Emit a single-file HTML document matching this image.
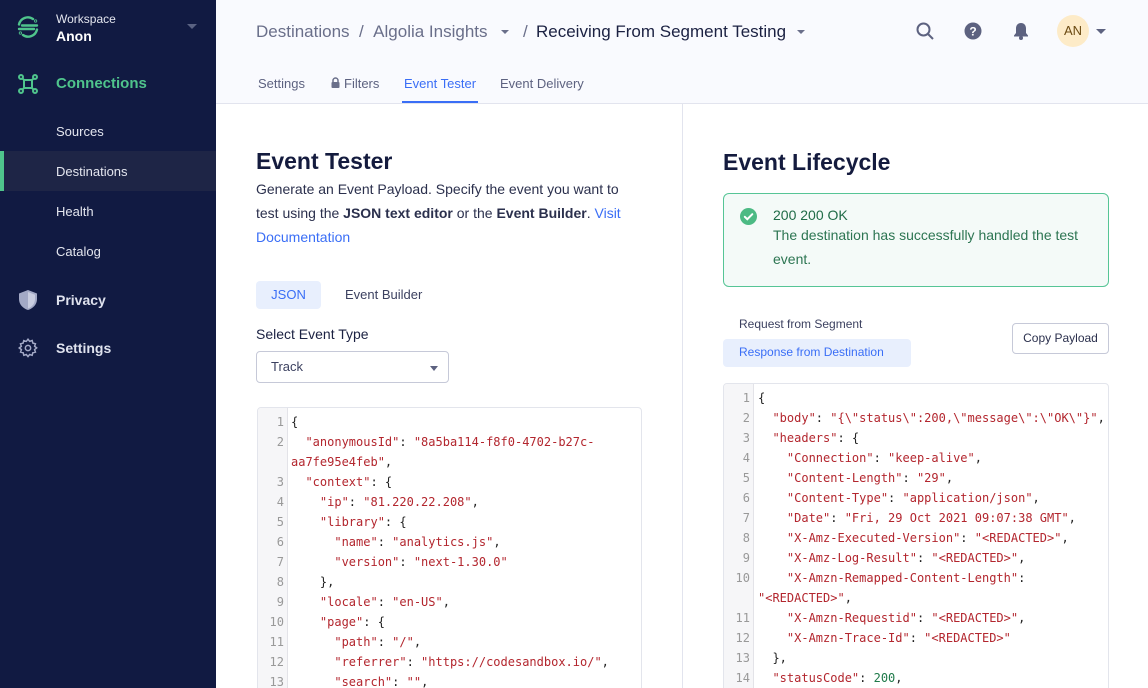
<!DOCTYPE html>
<html><head><meta charset="utf-8">
<style>
*{box-sizing:border-box;margin:0;padding:0}
html,body{width:1148px;height:688px;overflow:hidden}
body{font-family:"Liberation Sans",sans-serif;background:#fff;position:relative;color:#1b2142}
.sb{position:absolute;left:0;top:0;width:216px;height:688px;background:#111a42}
.abs{position:absolute}
.sbi{position:absolute;left:56px;font-size:13px;color:#e4e6ef}
.top{position:absolute;left:216px;top:0;width:932px;height:104px;background:#f9fafe;border-bottom:1px solid #e2e4ee}
.code{position:absolute;border:1px solid #e3e5ec;border-radius:4px;background:#fff;overflow:hidden;font-family:"DejaVu Sans Mono",monospace;font-size:12px}
.gut{position:absolute;left:0;top:0;bottom:0;width:30px;background:#f6f6f8;border-right:1px solid #e3e3e8}
.ln{position:absolute;height:20px;line-height:20px;white-space:pre}
.n{color:#999;width:26px;text-align:right;left:0}
.s{color:#b3262e}.k{color:#b3262e}.p{color:#222}.g{color:#1f7a4a}
</style></head><body>
<div class="sb">
  <svg class="abs" style="left:16px;top:15px" width="24" height="24" viewBox="0 0 24 24" fill="none" stroke="#4fc48c" stroke-width="2.4" stroke-linecap="round"><path d="M3 9.5A9 9 0 0 1 17 4"/><path d="M21 14.5A9 9 0 0 1 7 20"/><path d="M6 10.5H21"/><path d="M3 14H18"/><circle cx="19.6" cy="6" r="0.4"/><circle cx="4.4" cy="18" r="0.4"/></svg>
  <div class="abs" style="left:56px;top:12px;font-size:12px;color:#e4e6ef">Workspace</div>
  <div class="abs" style="left:56px;top:28px;font-size:14px;color:#fff;font-weight:bold">Anon</div>
  <div class="abs" style="left:187px;top:24px;width:0;height:0;border-left:5px solid transparent;border-right:5px solid transparent;border-top:5px solid #5a6282"></div>
  <svg class="abs" style="left:18px;top:74px" width="20" height="20" viewBox="0 0 20 20" fill="none" stroke="#4fc48c" stroke-width="2"><circle cx="3" cy="3" r="2"/><circle cx="17" cy="3" r="2"/><circle cx="3" cy="17" r="2"/><circle cx="17" cy="17" r="2"/><rect x="6" y="6" width="8" height="8"/><path d="M4.5 4.5L6 6M15.5 4.5L14 6M4.5 15.5L6 14M15.5 15.5L14 14"/></svg>
  <div class="abs" style="left:56px;top:75px;font-size:15px;color:#4fc48c;font-weight:bold">Connections</div>
  <div class="sbi" style="top:124px">Sources</div>
  <div class="abs" style="left:0;top:151px;width:216px;height:40px;background:#1e2546"></div>
  <div class="abs" style="left:0;top:151px;width:4px;height:40px;background:#4fc48c"></div>
  <div class="sbi" style="top:164px">Destinations</div>
  <div class="sbi" style="top:204px">Health</div>
  <div class="sbi" style="top:244px">Catalog</div>
  <svg class="abs" style="left:19px;top:290px" width="18" height="20" viewBox="0 0 18 20"><path d="M9 0L0 3.5V9c0 5.5 4 9.5 9 11 5-1.5 9-5.5 9-11V3.5z" fill="#a3a9c6"/><path d="M9 2L16 4.8V9c0 4.5-3 8-7 9.5z" fill="#c9cde0"/></svg>
  <div class="abs" style="left:56px;top:292px;font-size:14px;color:#dfe2ee;font-weight:bold">Privacy</div>
  <svg class="abs" style="left:18px;top:338px" width="20" height="20" viewBox="0 0 24 24" fill="none" stroke="#a3a9c6" stroke-width="1.8"><circle cx="12" cy="12" r="3.2"/><path d="M12 1.5l2 2.5 3-1 .8 3.1 3.1.8-1 3 2.5 2-2.5 2 1 3-3.1.8-.8 3.1-3-1-2 2.5-2-2.5-3 1-.8-3.1-3.1-.8 1-3L1.5 12 4 10l-1-3 3.1-.8L6.9 3.1l3 1z"/></svg>
  <div class="abs" style="left:56px;top:340px;font-size:14px;color:#dfe2ee;font-weight:bold">Settings</div>
</div>

<div class="top">
  <div class="abs" style="left:40px;top:22px;font-size:17px;color:#6a6f8a;white-space:nowrap">Destinations &nbsp;/ &nbsp;Algolia Insights</div>
  <div class="abs" style="left:285px;top:30px;border-left:4px solid transparent;border-right:4px solid transparent;border-top:4px solid #6a6f8a"></div>
  <div class="abs" style="left:307px;top:22px;font-size:17px;color:#6a6f8a">/</div>
  <div class="abs" style="left:320px;top:22px;font-size:17px;color:#1b2142;font-weight:500;white-space:nowrap">Receiving From Segment Testing</div>
  <div class="abs" style="left:581px;top:30px;border-left:4px solid transparent;border-right:4px solid transparent;border-top:4px solid #6a6f8a"></div>
  <svg class="abs" style="left:700px;top:22px" width="18" height="18" viewBox="0 0 18 18" fill="none" stroke="#5d6280" stroke-width="2"><circle cx="7.5" cy="7.5" r="6"/><path d="M12 12l5 5"/></svg>
  <svg class="abs" style="left:748px;top:22px" width="18" height="18" viewBox="0 0 18 18"><circle cx="9" cy="9" r="8.5" fill="#5d6280"/><text x="9" y="13.5" text-anchor="middle" font-size="12" font-weight="bold" fill="#fff" font-family="Liberation Sans">?</text></svg>
  <svg class="abs" style="left:797px;top:22px" width="16" height="18" viewBox="0 0 16 18"><path d="M8 1c-3 0-5 2.3-5 5.3V11L1 13.5v1h14v-1L13 11V6.3C13 3.3 11 1 8 1z" fill="#5d6280"/><circle cx="8" cy="16" r="2" fill="#5d6280"/></svg>
  <div class="abs" style="left:841px;top:15px;width:32px;height:32px;border-radius:50%;background:#fdebc8;color:#6b4a12;font-size:13px;text-align:center;line-height:32px">AN</div>
  <div class="abs" style="left:880px;top:29px;border-left:5px solid transparent;border-right:5px solid transparent;border-top:5px solid #5d6280"></div>
  <div class="abs" style="left:42px;top:76px;font-size:13px;color:#5d6280">Settings</div>
  <svg class="abs" style="left:115px;top:77px" width="9" height="11" viewBox="0 0 9 11"><path d="M2 5V3.5a2.5 2.5 0 0 1 5 0V5" stroke="#6a6f8a" stroke-width="1.5" fill="none"/><rect x="0.5" y="5" width="8" height="6" rx="1" fill="#6a6f8a"/></svg>
  <div class="abs" style="left:128px;top:76px;font-size:13px;color:#5d6280">Filters</div>
  <div class="abs" style="left:188px;top:76px;font-size:13px;color:#3a6ef6">Event Tester</div>
  <div class="abs" style="left:186px;top:101px;width:76px;height:2px;background:#3a6ef6"></div>
  <div class="abs" style="left:284px;top:76px;font-size:13px;color:#5d6280">Event Delivery</div>
</div>

<div class="abs" style="left:682px;top:104px;width:1px;height:584px;background:#e2e4ee"></div>

<!-- left -->
<div class="abs" style="left:256px;top:148px;font-size:23px;font-weight:bold;color:#141b3e">Event Tester</div>
<div class="abs" style="left:256px;top:177px;width:378px;font-size:14px;line-height:24px;color:#2b304d">Generate an Event Payload. Specify the event you want to test using the <b style="font-weight:600">JSON text editor</b> or the <b style="font-weight:600">Event Builder</b>. <span style="color:#3a6ef6">Visit Documentation</span></div>
<div class="abs" style="left:256px;top:281px;width:65px;height:28px;background:#e8effd;border-radius:4px;color:#3a6ef6;font-size:13px;text-align:center;line-height:28px">JSON</div>
<div class="abs" style="left:345px;top:287px;font-size:13px;color:#3c4160">Event Builder</div>
<div class="abs" style="left:256px;top:326px;font-size:14px;color:#1b2142;font-weight:500">Select Event Type</div>
<div class="abs" style="left:256px;top:351px;width:193px;height:32px;border:1px solid #c6c9d8;border-radius:4px;background:#fff"></div>
<div class="abs" style="left:271px;top:359px;font-size:13px;color:#3c4160">Track</div>
<div class="abs" style="left:430px;top:366px;border-left:4px solid transparent;border-right:4px solid transparent;border-top:5px solid #5d6280"></div>

<div class="code" style="left:257px;top:407px;width:385px;height:290px">
<div class="gut"></div>
<div class="ln n" style="top:4px">1</div><div class="ln p" style="left:33px;top:4px">{</div>
<div class="ln n" style="top:24px">2</div><div class="ln" style="left:33px;top:24px"><span class="k">  "anonymousId"</span><span class="p">: </span><span class="s">"8a5ba114-f8f0-4702-b27c-</span></div>
<div class="ln" style="left:33px;top:44px"><span class="s">aa7fe95e4feb"</span><span class="p">,</span></div>
<div class="ln n" style="top:64px">3</div><div class="ln" style="left:33px;top:64px"><span class="k">  "context"</span><span class="p">: {</span></div>
<div class="ln n" style="top:84px">4</div><div class="ln" style="left:33px;top:84px"><span class="k">    "ip"</span><span class="p">: </span><span class="s">"81.220.22.208"</span><span class="p">,</span></div>
<div class="ln n" style="top:104px">5</div><div class="ln" style="left:33px;top:104px"><span class="k">    "library"</span><span class="p">: {</span></div>
<div class="ln n" style="top:124px">6</div><div class="ln" style="left:33px;top:124px"><span class="k">      "name"</span><span class="p">: </span><span class="s">"analytics.js"</span><span class="p">,</span></div>
<div class="ln n" style="top:144px">7</div><div class="ln" style="left:33px;top:144px"><span class="k">      "version"</span><span class="p">: </span><span class="s">"next-1.30.0"</span></div>
<div class="ln n" style="top:164px">8</div><div class="ln p" style="left:33px;top:164px">    },</div>
<div class="ln n" style="top:184px">9</div><div class="ln" style="left:33px;top:184px"><span class="k">    "locale"</span><span class="p">: </span><span class="s">"en-US"</span><span class="p">,</span></div>
<div class="ln n" style="top:204px">10</div><div class="ln" style="left:33px;top:204px"><span class="k">    "page"</span><span class="p">: {</span></div>
<div class="ln n" style="top:224px">11</div><div class="ln" style="left:33px;top:224px"><span class="k">      "path"</span><span class="p">: </span><span class="s">"/"</span><span class="p">,</span></div>
<div class="ln n" style="top:244px">12</div><div class="ln" style="left:33px;top:244px"><span class="k">      "referrer"</span><span class="p">: </span><span class="s">"https://codesandbox.io/"</span><span class="p">,</span></div>
<div class="ln n" style="top:264px">13</div><div class="ln" style="left:33px;top:264px"><span class="k">      "search"</span><span class="p">: </span><span class="s">""</span><span class="p">,</span></div>
</div>

<!-- right -->
<div class="abs" style="left:723px;top:149px;font-size:23px;font-weight:bold;color:#141b3e">Event Lifecycle</div>
<div class="abs" style="left:723px;top:193px;width:386px;height:94px;border:1px solid #56c596;border-radius:6px;background:#f4faf8"></div>
<svg class="abs" style="left:740px;top:208px" width="17" height="17" viewBox="0 0 17 17"><circle cx="8.5" cy="8.5" r="8.5" fill="#4cba84"/><path d="M4.8 8.8l2.5 2.4 5-5" stroke="#fff" stroke-width="2" fill="none" stroke-linecap="round"/></svg>
<div class="abs" style="left:773px;top:207px;font-size:14px;color:#1f6b47">200 200 OK</div>
<div class="abs" style="left:773px;top:223px;width:326px;font-size:14px;line-height:24px;color:#2c7552">The destination has successfully handled the test event.</div>
<div class="abs" style="left:739px;top:317px;font-size:12px;color:#3c4160">Request from Segment</div>
<div class="abs" style="left:723px;top:339px;width:188px;height:28px;background:#e8effd;border-radius:4px"></div>
<div class="abs" style="left:739px;top:345px;font-size:12px;color:#3a6ef6">Response from Destination</div>
<div class="abs" style="left:1012px;top:323px;width:97px;height:31px;border:1px solid #c6c9d8;border-radius:4px;background:#fff;font-size:12px;color:#2b304d;text-align:center;line-height:29px">Copy Payload</div>

<div class="code" style="left:723px;top:383px;width:386px;height:310px">
<div class="gut"></div>
<div class="ln n" style="top:4px">1</div><div class="ln p" style="left:34px;top:4px">{</div>
<div class="ln n" style="top:24px">2</div><div class="ln" style="left:34px;top:24px"><span class="k">  "body"</span><span class="p">: </span><span class="s">"{\"status\":200,\"message\":\"OK\"}"</span><span class="p">,</span></div>
<div class="ln n" style="top:44px">3</div><div class="ln" style="left:34px;top:44px"><span class="k">  "headers"</span><span class="p">: {</span></div>
<div class="ln n" style="top:64px">4</div><div class="ln" style="left:34px;top:64px"><span class="k">    "Connection"</span><span class="p">: </span><span class="s">"keep-alive"</span><span class="p">,</span></div>
<div class="ln n" style="top:84px">5</div><div class="ln" style="left:34px;top:84px"><span class="k">    "Content-Length"</span><span class="p">: </span><span class="s">"29"</span><span class="p">,</span></div>
<div class="ln n" style="top:104px">6</div><div class="ln" style="left:34px;top:104px"><span class="k">    "Content-Type"</span><span class="p">: </span><span class="s">"application/json"</span><span class="p">,</span></div>
<div class="ln n" style="top:124px">7</div><div class="ln" style="left:34px;top:124px"><span class="k">    "Date"</span><span class="p">: </span><span class="s">"Fri, 29 Oct 2021 09:07:38 GMT"</span><span class="p">,</span></div>
<div class="ln n" style="top:144px">8</div><div class="ln" style="left:34px;top:144px"><span class="k">    "X-Amz-Executed-Version"</span><span class="p">: </span><span class="s">"&lt;REDACTED&gt;"</span><span class="p">,</span></div>
<div class="ln n" style="top:164px">9</div><div class="ln" style="left:34px;top:164px"><span class="k">    "X-Amz-Log-Result"</span><span class="p">: </span><span class="s">"&lt;REDACTED&gt;"</span><span class="p">,</span></div>
<div class="ln n" style="top:184px">10</div><div class="ln" style="left:34px;top:184px"><span class="k">    "X-Amzn-Remapped-Content-Length"</span><span class="p">:</span></div>
<div class="ln" style="left:34px;top:204px"><span class="s">"&lt;REDACTED&gt;"</span><span class="p">,</span></div>
<div class="ln n" style="top:224px">11</div><div class="ln" style="left:34px;top:224px"><span class="k">    "X-Amzn-Requestid"</span><span class="p">: </span><span class="s">"&lt;REDACTED&gt;"</span><span class="p">,</span></div>
<div class="ln n" style="top:244px">12</div><div class="ln" style="left:34px;top:244px"><span class="k">    "X-Amzn-Trace-Id"</span><span class="p">: </span><span class="s">"&lt;REDACTED&gt;"</span></div>
<div class="ln n" style="top:264px">13</div><div class="ln p" style="left:34px;top:264px">  },</div>
<div class="ln n" style="top:284px">14</div><div class="ln" style="left:34px;top:284px"><span class="k">  "statusCode"</span><span class="p">: </span><span class="g">200</span><span class="p">,</span></div>
</div>
</body></html>
